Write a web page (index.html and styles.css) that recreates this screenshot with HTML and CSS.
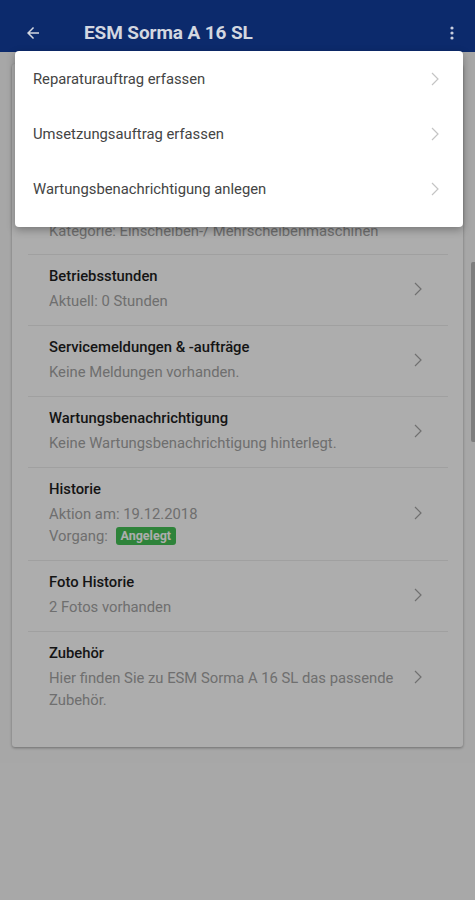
FILE: index.html
```html
<!DOCTYPE html>
<html lang="de">
<head>
<meta charset="utf-8">
<title>ESM Sorma A 16 SL</title>
<link rel="stylesheet" href="styles.css">
</head>
<body>
<div class="app">
  <header class="topbar">
    <svg class="back" width="18" height="18" viewBox="0 0 24 24"><path d="M20 11H7.83l5.59-5.59L12 4l-8 8 8 8 1.41-1.41L7.83 13H20v-2z" fill="currentColor"/></svg>
    <h1 class="title">ESM Sorma A 16 SL</h1>
    <svg class="kebab" width="4" height="14" viewBox="0 0 4 14"><circle cx="2" cy="2" r="1.6" fill="currentColor"/><circle cx="2" cy="7" r="1.6" fill="currentColor"/><circle cx="2" cy="12" r="1.6" fill="currentColor"/></svg>
  </header>

  <main class="content">
    <section class="card">
      <div class="row product">
        <div class="product-image"></div>
        <div class="row-text">
          <div class="row-sub">Kategorie: Einscheiben-/ Mehrscheibenmaschinen</div>
        </div>
      </div>
      <div class="row">
        <div class="row-text">
          <div class="row-title">Betriebsstunden</div>
          <div class="row-sub">Aktuell: 0 Stunden</div>
        </div>
        <svg class="chev" width="8" height="14" viewBox="0 0 8 14"><path d="M1 1l6 6-6 6" fill="none" stroke="currentColor" stroke-width="1.2"/></svg>
      </div>
      <div class="row">
        <div class="row-text">
          <div class="row-title">Servicemeldungen &amp; -aufträge</div>
          <div class="row-sub">Keine Meldungen vorhanden.</div>
        </div>
        <svg class="chev" width="8" height="14" viewBox="0 0 8 14"><path d="M1 1l6 6-6 6" fill="none" stroke="currentColor" stroke-width="1.2"/></svg>
      </div>
      <div class="row">
        <div class="row-text">
          <div class="row-title">Wartungsbenachrichtigung</div>
          <div class="row-sub">Keine Wartungsbenachrichtigung hinterlegt.</div>
        </div>
        <svg class="chev" width="8" height="14" viewBox="0 0 8 14"><path d="M1 1l6 6-6 6" fill="none" stroke="currentColor" stroke-width="1.2"/></svg>
      </div>
      <div class="row">
        <div class="row-text">
          <div class="row-title">Historie</div>
          <div class="row-sub">Aktion am: 19.12.2018</div>
          <div class="row-sub">Vorgang: <span class="badge">Angelegt</span></div>
        </div>
        <svg class="chev" width="8" height="14" viewBox="0 0 8 14"><path d="M1 1l6 6-6 6" fill="none" stroke="currentColor" stroke-width="1.2"/></svg>
      </div>
      <div class="row">
        <div class="row-text">
          <div class="row-title">Foto Historie</div>
          <div class="row-sub">2 Fotos vorhanden</div>
        </div>
        <svg class="chev" width="8" height="14" viewBox="0 0 8 14"><path d="M1 1l6 6-6 6" fill="none" stroke="currentColor" stroke-width="1.2"/></svg>
      </div>
      <div class="row last">
        <div class="row-text">
          <div class="row-title">Zubehör</div>
          <div class="row-sub">Hier finden Sie zu ESM Sorma A 16 SL das passende Zubehör.</div>
        </div>
        <svg class="chev" width="8" height="14" viewBox="0 0 8 14"><path d="M1 1l6 6-6 6" fill="none" stroke="currentColor" stroke-width="1.2"/></svg>
      </div>
    </section>
    <div class="scrim"></div>
    <div class="scrollbar"></div>
  </main>

  <nav class="menu">
    <div class="menu-item"><span>Reparaturauftrag erfassen</span><svg class="menu-chev" width="8" height="14" viewBox="0 0 8 14"><path d="M1 1l6 6-6 6" fill="none" stroke="currentColor" stroke-width="1.2"/></svg></div>
    <div class="menu-item"><span>Umsetzungsauftrag erfassen</span><svg class="menu-chev" width="8" height="14" viewBox="0 0 8 14"><path d="M1 1l6 6-6 6" fill="none" stroke="currentColor" stroke-width="1.2"/></svg></div>
    <div class="menu-item"><span>Wartungsbenachrichtigung anlegen</span><svg class="menu-chev" width="8" height="14" viewBox="0 0 8 14"><path d="M1 1l6 6-6 6" fill="none" stroke="currentColor" stroke-width="1.2"/></svg></div>
  </nav>
</div>
</body>
</html>
```

FILE: styles.css
```css
* { box-sizing: border-box; }
html, body { margin: 0; padding: 0; }
body {
  font-family: Roboto, "Noto Sans", "Liberation Sans", sans-serif;
  background: #f7f7f7;
  width: 475px;
  height: 900px;
  overflow: hidden;
}
.app {
  position: relative;
  height: 900px;
}
.topbar {
  height: 52px;
  background: #0c2a6c;
  display: flex;
  align-items: center;
  padding: 13px 0 0 24px;
  color: #d3d7e0;
}
.back { flex: none; color: #d3d7e0; }
.title {
  margin: 0 0 0 42px;
  font-size: 19px;
  font-weight: 700;
  letter-spacing: -0.1px;
  flex: 1;
  color: #d3d7e0;
}
.kebab { flex: none; margin-right: 21px; color: #c9cede; }

.content {
  position: relative;
  height: 848px;
  padding: 12px 12px 0;
}
.card {
  background: #fff;
  border-radius: 3px;
  box-shadow: 0 1px 3px rgba(0,0,0,0.35);
  padding: 0 15px 23px 16px;
}
.row {
  display: flex;
  align-items: center;
  border-bottom: 1px solid #ececec;
  padding: 11px 26px 13px 21px;
}
.row.last { border-bottom: none; }
.row.product {
  flex-direction: column;
  align-items: stretch;
  padding-top: 12px;
  padding-bottom: 12px;
}
.product-image { height: 144px; }
.row-text { flex: 1; }
.row-title {
  font-size: 14.8px;
  font-weight: 500;
  line-height: 20px;
  color: #1e1e1e;
  margin-bottom: 4px;
}
.row-sub {
  font-size: 14.8px;
  line-height: 22px;
  color: #a4a4a4;
}
.row.last .row-sub { padding-right: 16px; }
.badge {
  display: inline-block;
  background: #44c256;
  color: #fff;
  font-size: 12.5px;
  font-weight: 700;
  line-height: 18px;
  padding: 0 5px;
  border-radius: 3px;
  margin-left: 4px;
  vertical-align: 1px;
}
.chev {
  flex: none;
  color: #a6a6a6;
}
.scrim {
  position: absolute;
  inset: 0;
  background: rgba(0,0,0,0.32);
}
.scrollbar {
  position: absolute;
  right: 0;
  top: 210px;
  width: 4px;
  height: 180px;
  background: #7e7e7e;
  border-radius: 2px 0 0 2px;
}

.menu {
  position: absolute;
  left: 15px;
  top: 51px;
  width: 448px;
  background: #fff;
  border-radius: 4px;
  box-shadow: 0 3px 8px rgba(0,0,0,0.3);
  padding-bottom: 11px;
}
.menu-item {
  height: 55px;
  display: flex;
  align-items: center;
  justify-content: space-between;
  padding: 0 24px 0 18px;
  font-size: 14.8px;
  color: #444;
}
.menu-chev {
  flex: none;
  color: #c4c4c4;
}
```
